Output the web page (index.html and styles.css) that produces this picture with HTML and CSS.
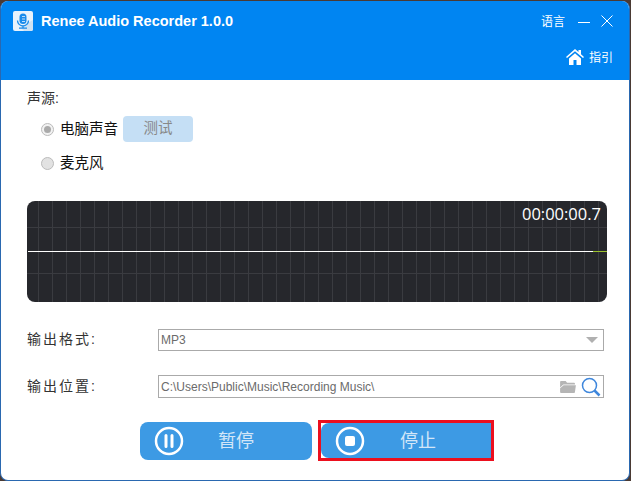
FILE: index.html
```html
<!DOCTYPE html>
<html lang="en">

<head>
 <meta charset="UTF-8">
 <meta name="viewport" content="width=device-width, initial-scale=1.0">
 <title>Renee Audio Recorder 1.0.0</title>
 <link rel="stylesheet" href="styles.css">
</head>

<body>
 <div class="window">

  <div class="header">
   <div class="title-row">
    <svg class="logo" width="20" height="20" viewBox="0 0 20 20">
     <rect width="20" height="20" rx="2" fill="#e9f3fc" />
     <path d="M20 9V18a2 2 0 0 1-2 2H11L7 16Z" fill="#cfe2f3" />
     <rect x="6.5" y="2.5" width="7" height="10.5" rx="3.5" fill="#1a8cec" />
     <path d="M4.5 9.5a5.5 5.5 0 0 0 11 0M10 15v2M6 17.2h8" fill="none" stroke="#1a8cec" stroke-width="1.3" />
     <path d="M9 5.5h3M9 8h3M9 10.5h3" stroke="#e9f3fc" stroke-width=".8" />
    </svg>
    <span class="app-name">Renee Audio Recorder 1.0.0</span>
    <span class="lang">语言</span>
    <svg class="win-btn" width="14" height="14" viewBox="0 0 14 14">
     <path d="M1 8.5H13" stroke="#fff" stroke-width="1" />
    </svg>
    <svg class="win-btn" width="12" height="12" viewBox="0 0 12 12">
     <path d="M.5 .5L11.5 11.5M11.5 .5L.5 11.5" stroke="#fff" stroke-width="1" />
    </svg>
   </div>
   <div class="guide-row">
    <svg width="18" height="16" viewBox="0 0 18 16">
     <path d="M9 0L12.5 3V1H15V5.2L18 8L17 9L9 2.2L1 9L0 8Z" fill="#fff" />
     <path d="M3 9.5L9 4.2L15 9.5V16H10.5V11H7.5V16H3Z" fill="#fff" />
    </svg>
    <span>指引</span>
   </div>
  </div>

  <div class="main">
   <div class="source-label">声源:</div>

   <div class="radio-row first">
    <span class="radio checked"></span>
    <span class="radio-text">电脑声音</span>
    <span class="test-btn">测试</span>
   </div>
   <div class="radio-row">
    <span class="radio"></span>
    <span class="radio-text">麦克风</span>
   </div>

   <div class="wave">
    <div class="wave-line"></div>
    <div class="wave-end"></div>
    <div class="timer">00:00:00.7</div>
   </div>

   <div class="field-row format-row">
    <label>输出格式:</label>
    <div class="field">
     <span class="field-text">MP3</span>
     <span class="arrow"></span>
    </div>
   </div>

   <div class="field-row path-row">
    <label>输出位置:</label>
    <div class="field">
     <span class="field-text">C:\Users\Public\Music\Recording Music\</span>
     <svg width="16" height="13" viewBox="0 0 17 14">
      <path d="M0 2a1 1 0 0 1 1-1H6L7.500 3H15a1 1 0 0 1 1 1V4.800H3.500L0 8Z" fill="#b5b5b5" />
      <path d="M0 13V9L3.800 5.600H17L16 13a1 1 0 0 1-1 1H1a1 1 0 0 1-1-1Z" fill="#b5b5b5" />
     </svg>
     <svg class="search" width="20" height="20" viewBox="0 0 20 20">
      <circle cx="8.500" cy="8.500" r="7" fill="none" stroke="#3f87dc" stroke-width="1.500" />
      <path d="M13.500 13.500L18.500 18.500" stroke="#3f87dc" stroke-width="2.500" />
     </svg>
    </div>
   </div>

   <div class="actions">
    <div class="action-btn">
     <svg width="30" height="30" viewBox="0 0 30 30">
      <circle cx="15" cy="15" r="13" fill="none" stroke="#fff" stroke-width="2.500" />
      <path d="M12 9.500V20.500M18 9.500V20.500" stroke="#fff" stroke-width="3" stroke-linecap="round" />
     </svg>
     <span>暂停</span>
    </div>
    <div class="stop-outline">
     <div class="action-btn stop">
      <svg width="30" height="30" viewBox="0 0 30 30">
       <circle cx="15" cy="15" r="13" fill="none" stroke="#fff" stroke-width="2.500" />
       <rect x="10" y="10" width="10" height="10" rx="2" fill="#fff" />
      </svg>
      <span>停止</span>
     </div>
    </div>
   </div>
  </div>

 </div>
</body>

</html>
```

FILE: styles.css
```css
html,
body {
 margin: 0;
 height: 100%;
}

body {
 background-color: #4a3a34;
 font-family: "Liberation Sans", "Noto Sans CJK SC", sans-serif;
 overflow: hidden;
}

.window {
 width: 630px;
 height: 480px;
 box-sizing: border-box;
 background-color: #fff;
 border: 1px solid #2a68b0;
 border-top: none;
 border-radius: 8px;
 overflow: hidden;
 margin-top: 1px;
}

.header {
 height: 79px;
 background-color: #0085f2;
 color: #fff;
 box-sizing: border-box;
 padding: 10px 16px 0 12px;
}

.title-row {
 display: flex;
 align-items: center;
 height: 20px;
}

.logo {
 margin-right: 8px;
}

.app-name {
 font-size: 14.5px;
 font-weight: bold;
 flex: 1;
}

.lang {
 font-size: 12px;
 margin-right: 12px;
 margin-bottom: 2px;
}

.win-btn {
 margin-right: 10px;
}

.win-btn:last-child {
 margin-right: 0;
}

.guide-row {
 display: flex;
 align-items: center;
 justify-content: flex-end;
 gap: 5px;
 margin-top: 17px;
 font-size: 12px;
 padding-right: 0;
}

.main {
 padding: 9px 23px 0 26px;
 font-size: 14.5px;
 color: #111;
}

.source-label {
 font-size: 14px;
 line-height: 18px;
 color: #333;
}

.radio-row {
 display: flex;
 align-items: center;
 height: 26px;
 margin-top: 8px;
 padding-left: 14px;
}

.radio-row.first {
 margin-top: 9px;
}

.radio {
 width: 11px;
 height: 11px;
 border: 1px solid #bbb;
 border-radius: 50%;
 background-color: #e2e2e2;
 margin-right: 6px;
 position: relative;
}

.radio.checked {
 background-color: #f2f2f2;
}

.radio.checked::after {
 content: "";
 position: absolute;
 left: 2px;
 top: 2px;
 width: 7px;
 height: 7px;
 border-radius: 50%;
 background-color: #aaa;
}

.radio-text {
 width: 63px;
 white-space: nowrap;
 margin-bottom: 3px;
}

.test-btn {
 width: 70px;
 height: 26px;
 line-height: 24px;
 text-align: center;
 border-radius: 4px;
 background-color: #c5dff5;
 color: #888;
}

.wave {
 position: relative;
 height: 101px;
 width: 580px;
 margin-top: 25px;
 border-radius: 8px;
 overflow: hidden;
 background-color: #26272c;
 background-image:
  repeating-linear-gradient(to right, transparent 0, transparent 11px, #3a3b40 11px, #3a3b40 12px, transparent 12px, transparent 14px),
  linear-gradient(to bottom, transparent 26px, #3a3b40 26px, #3a3b40 27px, transparent 27px, transparent 72px, #3a3b40 72px, #3a3b40 73px, transparent 73px);
}

.wave-line {
 position: absolute;
 left: 1px;
 right: 14px;
 top: 50px;
 height: 1px;
 background-color: #fff;
}

.wave-end {
 position: absolute;
 right: 0;
 width: 14px;
 top: 50px;
 height: 1px;
 background-color: #9ac02c;
}

.timer {
 position: absolute;
 right: 6px;
 top: 3px;
 font-family: "Open Sans", "Liberation Sans", sans-serif;
 font-size: 16.5px;
 line-height: 20px;
 color: #fff;
}

.field-row {
 display: flex;
 align-items: center;
}

.format-row {
 margin-top: 26px;
}

.path-row {
 margin-top: 24px;
}

.field-row label {
 width: 131px;
 padding-bottom: 3px;
 box-sizing: border-box;
 font-size: 14px;
 letter-spacing: 2px;
 color: #333;
}

.field {
 display: flex;
 align-items: center;
 width: 446px;
 height: 22px;
 box-sizing: border-box;
 border: 1px solid #aaa;
 padding: 0 2px;
}

.path-row .field {
 height: 23px;
}

.field-text {
 flex: 1;
 font-size: 12px;
 color: #6b6b6b;
}

.arrow {
 width: 0;
 height: 0;
 border-left: 6px solid transparent;
 border-right: 6px solid transparent;
 border-top: 6px solid #b0b0b0;
 margin-right: 3px;
}

.search {
 margin-left: 5px;
 margin-right: 0;
}

.actions {
 display: flex;
 align-items: center;
 margin-top: 22px;
 margin-left: 113px;
 gap: 6px;
}

.action-btn {
 display: flex;
 align-items: center;
 width: 172px;
 height: 38px;
 box-sizing: border-box;
 padding-left: 14px;
 border-radius: 8px;
 background-color: #3d9ae4;
 color: #d3e6f8;
 font-size: 18px;
}

.action-btn span {
 margin-left: 34px;
 margin-bottom: 3px;
}

.stop-outline {
 border: 3px solid #ec0f1e;
 height: 35px;
 width: 170px;
 display: flex;
 align-items: center;
}

.action-btn.stop {
 width: 170px;
 height: 35px;
 border-radius: 8px 0 0 8px;
}

.action-btn.stop span {
 margin-left: 35px;
}
```
